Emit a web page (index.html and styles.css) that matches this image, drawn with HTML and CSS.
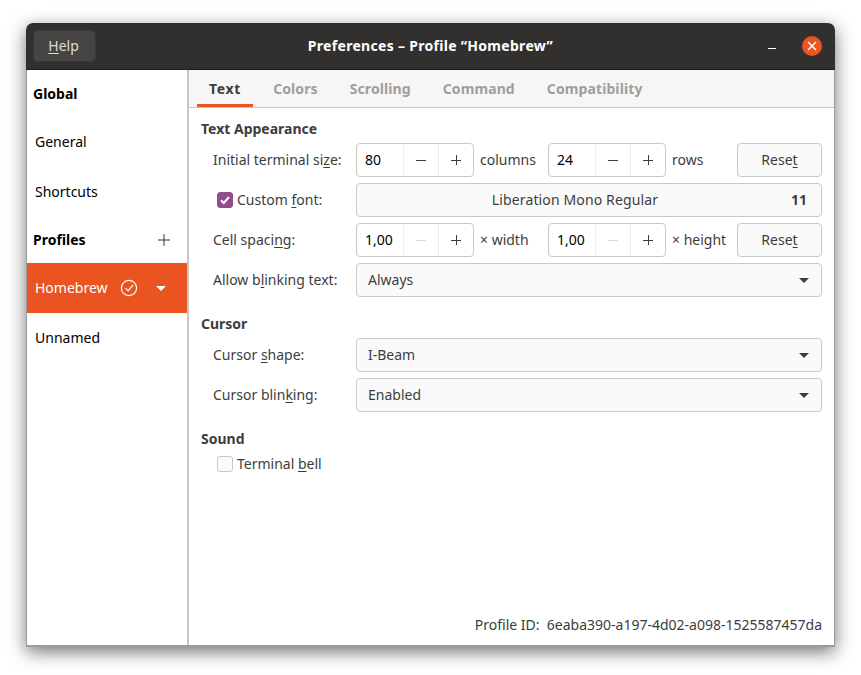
FILE: index.html
```html
<!DOCTYPE html>
<html lang="en">
<head>
    <meta charset="UTF-8">
    <meta name="viewport" content="width=device-width, initial-scale=1.0">
    <title>Preferences</title>
    <link rel="stylesheet" href="styles.css">
</head>
<body>
    <div class="window">
        <header class="titlebar">
            <button class="help-button"><u>H</u>elp</button>
            <div class="window-title">Preferences – Profile “Homebrew”</div>
            <svg class="minimize" width="10" height="10" viewBox="0 0 10 10"><path d="M1 7.5h8" stroke="#fff" stroke-width="1"/></svg>
            <div class="close-button">
                <svg width="10" height="10" viewBox="0 0 10 10"><path d="M1 1l8 8M9 1l-8 8" stroke="#fff" stroke-width="1.5"/></svg>
            </div>
        </header>
        <div class="content">
            <aside class="sidebar">
                <div class="side-heading">Global</div>
                <div class="side-item">General</div>
                <div class="side-item">Shortcuts</div>
                <div class="side-heading profiles-heading">
                    Profiles
                    <svg width="12" height="12" viewBox="0 0 12 12"><path d="M6 0v12M0 6h12" stroke="#333" stroke-width="1"/></svg>
                </div>
                <div class="side-item profile-item selected">
                    <span class="profile-name">Homebrew</span>
                    <svg class="check-icon" width="18" height="18" viewBox="0 0 18 18" fill="none" stroke="#fff" stroke-width="1.2"><circle cx="9" cy="9" r="7.6"/><path d="M5.4 9.2l2.7 2.7 5-6"/></svg>
                    <span class="side-arrow"></span>
                </div>
                <div class="side-item profile-item">Unnamed</div>
            </aside>
            <main class="main">
                <nav class="tabs">
                    <div class="tab active">Text</div>
                    <div class="tab">Colors</div>
                    <div class="tab">Scrolling</div>
                    <div class="tab">Command</div>
                    <div class="tab">Compatibility</div>
                </nav>
                <div class="panel">
                    <h3>Text Appearance</h3>
                    <div class="row">
                        <label>Initial terminal si<u>z</u>e:</label>
                        <div class="spin">
                            <span class="spin-value">80</span>
                            <span class="spin-btn"><svg width="12" height="12" viewBox="0 0 12 12"><path d="M1 6.5h10" stroke="#3d3d3d"/></svg></span>
                            <span class="spin-btn"><svg width="12" height="12" viewBox="0 0 12 12"><path d="M1 6.5h10M6.5 1v10" stroke="#3d3d3d"/></svg></span>
                        </div>
                        <span class="unit unit-first">columns</span>
                        <div class="spin">
                            <span class="spin-value">24</span>
                            <span class="spin-btn"><svg width="12" height="12" viewBox="0 0 12 12"><path d="M1 6.5h10" stroke="#3d3d3d"/></svg></span>
                            <span class="spin-btn"><svg width="12" height="12" viewBox="0 0 12 12"><path d="M1 6.5h10M6.5 1v10" stroke="#3d3d3d"/></svg></span>
                        </div>
                        <span class="unit">rows</span>
                        <button class="reset">Rese<u>t</u></button>
                    </div>
                    <div class="row">
                        <label class="check-label">
                            <span class="checkbox checked"><svg width="12" height="12" viewBox="0 0 12 12" fill="none"><path d="M2 6.2l2.8 2.8 5.2-6" stroke="#fff" stroke-width="2"/></svg></span>
                            <span class="check-text">Custom <u>f</u>ont:</span>
                        </label>
                        <div class="font-button">
                            <span class="font-name">Liberation Mono Regular</span>
                            <span class="font-size">11</span>
                        </div>
                    </div>
                    <div class="row">
                        <label>Cell spaci<u>n</u>g:</label>
                        <div class="spin">
                            <span class="spin-value">1,00</span>
                            <span class="spin-btn"><svg width="12" height="12" viewBox="0 0 12 12"><path d="M1 6.5h10" stroke="#d8d8d8"/></svg></span>
                            <span class="spin-btn"><svg width="12" height="12" viewBox="0 0 12 12"><path d="M1 6.5h10M6.5 1v10" stroke="#3d3d3d"/></svg></span>
                        </div>
                        <span class="unit unit-first">× width</span>
                        <div class="spin">
                            <span class="spin-value">1,00</span>
                            <span class="spin-btn"><svg width="12" height="12" viewBox="0 0 12 12"><path d="M1 6.5h10" stroke="#d8d8d8"/></svg></span>
                            <span class="spin-btn"><svg width="12" height="12" viewBox="0 0 12 12"><path d="M1 6.5h10M6.5 1v10" stroke="#3d3d3d"/></svg></span>
                        </div>
                        <span class="unit">× height</span>
                        <button class="reset">Rese<u>t</u></button>
                    </div>
                    <div class="row">
                        <label>Allow b<u>l</u>inking text:</label>
                        <div class="combo"><span class="combo-text">Always</span><span class="combo-arrow"></span></div>
                    </div>
                    <h3>Cursor</h3>
                    <div class="row">
                        <label>Cursor <u>s</u>hape:</label>
                        <div class="combo"><span class="combo-text">I-Beam</span><span class="combo-arrow"></span></div>
                    </div>
                    <div class="row">
                        <label>Cursor blin<u>k</u>ing:</label>
                        <div class="combo"><span class="combo-text">Enabled</span><span class="combo-arrow"></span></div>
                    </div>
                    <h3>Sound</h3>
                    <div class="bell-row">
                        <span class="checkbox"></span>
                        <span class="check-text">Terminal <u>b</u>ell</span>
                    </div>
                    <div class="profile-id">Profile ID:&nbsp; 6eaba390-a197-4d02-a098-1525587457da</div>
                </div>
            </main>
        </div>
    </div>
</body>
</html>
```

FILE: styles.css
```css
html, body {
    height: 100%;
}
body {
    margin: 0;
    padding: 23px 26px 28px;
    box-sizing: border-box;
    background-color: #ffffff;
    font-family: "Noto Sans", sans-serif;
    font-size: 14px;
    color: #3d3d3d;
    overflow: hidden;
}
u {
    text-underline-offset: 2px;
}
.window {
    width: 809px;
    height: 624px;
    display: flex;
    flex-direction: column;
    border-radius: 7px 7px 0 0;
    box-shadow: 0 5px 18px rgba(0, 0, 0, 0.55);
}
.titlebar {
    height: 47px;
    flex: none;
    display: flex;
    align-items: center;
    padding: 0 13px 0 7px;
    box-sizing: border-box;
    background-color: #322f2f;
    border-radius: 7px 7px 0 0;
    border-bottom: 1px solid #1c1b1b;
    color: #ffffff;
}
.help-button {
    width: 63px;
    height: 32px;
    border: 1px solid #3a3835;
    border-radius: 4px;
    background-color: #474543;
    color: #dfdbd2;
    font: inherit;
    padding: 0 2px 2px 0;
}
.window-title {
    flex: 1;
    text-align: center;
    font-weight: 700;
    font-size: 14px;
    letter-spacing: 0.3px;
    padding: 0 2px 2px 0;
}
.minimize {
    margin-right: 25px;
}
.close-button {
    width: 20px;
    height: 20px;
    border-radius: 50%;
    background-color: #e95420;
    display: flex;
    align-items: center;
    justify-content: center;
}
.content {
    flex: 1;
    display: flex;
    min-height: 0;
    background-color: #ffffff;
    border: 1px solid #9b9b9b;
    border-top: none;
    border-bottom-width: 2px;
}
.sidebar {
    width: 160px;
    flex: none;
    border-right: 2px solid #c6c6c6;
    color: #000000;
}
.side-heading {
    height: 46px;
    padding: 0 6px;
    display: flex;
    align-items: center;
    justify-content: space-between;
    font-weight: 700;
}
.profiles-heading {
    height: 47px;
    padding-right: 17px;
}
.side-item {
    height: 50px;
    box-sizing: border-box;
    padding: 0 8px;
    display: flex;
    align-items: center;
}
.profile-item {
    padding-bottom: 2px;
}
.side-item.selected {
    background-color: #e95420;
    color: #ffffff;
}
.profile-name {
    width: 85px;
}
.check-icon {
    margin-top: 2px;
}
.side-arrow {
    margin: 2px 0 0 18px;
    border-left: 5px solid transparent;
    border-right: 5px solid transparent;
    border-top: 5px solid #ffffff;
}
.main {
    flex: 1;
    min-width: 0;
    display: flex;
    flex-direction: column;
}
.tabs {
    height: 38px;
    flex: none;
    box-sizing: border-box;
    display: flex;
    padding-left: 8px;
    background-color: #f6f6f6;
    border-bottom: 1px solid #c6c6c6;
    font-weight: 700;
    letter-spacing: 0.1px;
    color: #a09e9c;
}
.tab {
    padding: 2px 12px 0;
    margin-right: 8px;
    height: 37px;
    box-sizing: border-box;
    display: flex;
    align-items: center;
    border-bottom: 3px solid transparent;
}
.tab.active {
    color: #3d3d3d;
    letter-spacing: 0.7px;
    border-bottom-color: #e95420;
}
.panel {
    flex: 1;
    display: flex;
    flex-direction: column;
    padding: 0 12px 11px 12px;
    min-height: 0;
}
h3 {
    margin: 10px 0 3px;
    height: 22px;
    line-height: 22px;
    font-size: 14px;
    font-weight: 700;
}
.row {
    display: flex;
    align-items: center;
    height: 34px;
    margin-bottom: 6px;
}
.row label {
    width: 155px;
    flex: none;
    box-sizing: border-box;
    padding: 0 0 2px 12px;
}
.row label.check-label {
    display: flex;
    align-items: center;
    gap: 4px;
    padding: 0 0 0 16px;
}
.check-text, .combo-text, .unit, .font-name, .font-size {
    padding-bottom: 2px;
}
.spin {
    width: 118px;
    height: 34px;
    flex: none;
    display: flex;
    box-sizing: border-box;
    border: 1px solid #cdc7c2;
    border-radius: 4px;
    background-color: #ffffff;
    color: #000000;
}
.spin-value {
    width: 46px;
    padding-left: 8px;
    box-sizing: border-box;
    line-height: 32px;
}
.spin-btn {
    flex: 1;
    display: flex;
    align-items: center;
    justify-content: center;
    border-left: 1px solid #eeeeee;
}
.unit {
    margin-left: 6px;
}
.unit-first {
    width: 68px;
    flex: none;
}
.reset {
    margin-left: auto;
    width: 85px;
    height: 34px;
    box-sizing: border-box;
    border: 1px solid #cdc7c2;
    border-radius: 4px;
    background-color: #fafafa;
    color: #3d3d3d;
    font: inherit;
    padding: 0 0 2px;
}
.font-button, .combo {
    flex: 1;
    height: 34px;
    display: flex;
    align-items: center;
    box-sizing: border-box;
    border: 1px solid #cdc7c2;
    border-radius: 4px;
    background-color: #fafafa;
}
.font-button {
    padding: 0 14px 0 12px;
}
.font-name {
    flex: 1;
    text-align: center;
    padding-right: 10px;
    letter-spacing: 0.13px;
}
.font-size {
    font-weight: 700;
}
.combo {
    justify-content: space-between;
    padding: 0 12px 0 11px;
}
.combo-arrow {
    border-left: 5px solid transparent;
    border-right: 5px solid transparent;
    border-top: 5px solid #3d3d3d;
}
.checkbox {
    width: 14px;
    height: 14px;
    flex: none;
    border: 1px solid #cdc7c2;
    border-radius: 3px;
    display: flex;
    align-items: center;
    justify-content: center;
    background-color: #fafafa;
}
.checkbox.checked {
    background-color: #924d8b;
    border-color: #924d8b;
}
.bell-row {
    display: flex;
    align-items: center;
    gap: 4px;
    padding-left: 16px;
    height: 22px;
}
.profile-id {
    margin-top: auto;
    text-align: right;
}
```
